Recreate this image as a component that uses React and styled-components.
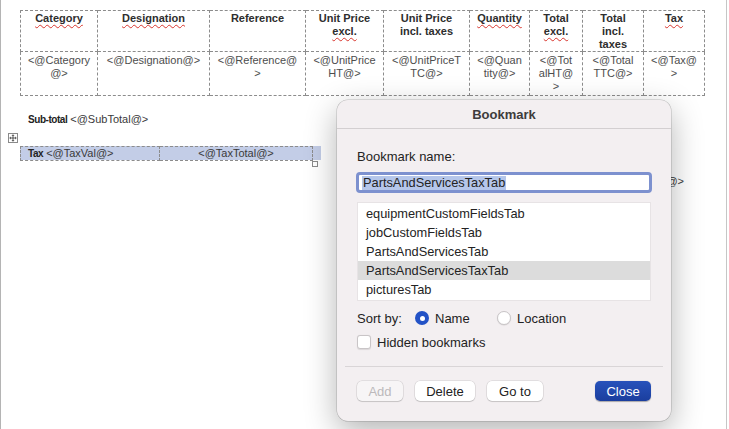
import React from "react";
import styled, { createGlobalStyle } from "styled-components";

const GlobalStyle = createGlobalStyle`
  html, body {
    margin: 0;
    padding: 0;
    background: #fff;
  }
  body {
    font-family: "Liberation Sans", Arial, sans-serif;
  }
`;

const Page = styled.div`
  position: relative;
  box-sizing: border-box;
  width: 727px;
  height: 429px;
  padding: 10px 0 0 19px;
  border-left: 1px solid #b4b4b4;
  border-right: 1px solid #c6c6c6;
  background: #fff;
  overflow: hidden;
`;

/* ---------- document table ---------- */

const Grid = styled.table`
  border-collapse: collapse;
  table-layout: fixed;
  width: 684px;
  font-size: 11px;
`;

const HeadCell = styled.th`
  height: 39px;
  padding: 1px 2px 0;
  border: 1px dashed #8c8c8c;
  vertical-align: top;
  text-align: center;
  font-weight: bold;
  line-height: 13px;
  color: #2e2e2e;
  white-space: nowrap;
`;

const BodyCell = styled.td`
  height: 41px;
  padding: 2px 2px 0;
  border: 1px dashed #8c8c8c;
  vertical-align: top;
  text-align: center;
  line-height: 13px;
  color: #4d4d4d;
  white-space: nowrap;
`;

const Squiggle = styled.span`
  text-decoration: ${(p) => (p.$spell ? "underline wavy #d8362e" : "none")};
  text-decoration-thickness: 1px;
  text-underline-offset: 2px;
`;

const Para = styled.div`
  font-size: 11px;
  line-height: 14px;
  color: #3a3a3a;
  margin-top: ${(p) => p.$top}px;
  padding-left: ${(p) => p.$indent || 0}px;
  padding-right: ${(p) => p.$right || 0}px;
  text-align: ${(p) => p.$align || "left"};
`;

const Label = styled.b`
  font-size: 10px;
  letter-spacing: -0.45px;
  color: #222;
  margin-right: 3px;
`;

const TaxBlock = styled.div`
  position: relative;
  margin-top: 19px;
  display: flex;
  width: 301px;
  height: 14px;
  background: #c3cde7;
`;

const TaxCell = styled.div`
  box-sizing: border-box;
  width: ${(p) => p.$w}px;
  height: 15px;
  border: 1px dashed #8c8c8c;
  border-left-width: ${(p) => (p.$first ? 1 : 0)}px;
  font-size: 11px;
  line-height: 12px;
  color: #3a3a3a;
  padding-left: ${(p) => (p.$center ? 0 : 7)}px;
  text-align: ${(p) => (p.$center ? "center" : "left")};
  white-space: nowrap;
`;

const MoveHandle = styled.div`
  position: absolute;
  left: -12px;
  top: -13px;
  box-sizing: border-box;
  width: 10px;
  height: 10px;
  border: 1px solid #8a8a8a;
  background: #fff;
  display: flex;
  align-items: center;
  justify-content: center;
`;

const ResizeHandle = styled.div`
  position: absolute;
  left: 292px;
  top: 15px;
  box-sizing: border-box;
  width: 6px;
  height: 6px;
  border: 1px solid #8a8a8a;
  background: #fff;
`;

/* ---------- bookmark dialog ---------- */

const Dialog = styled.div`
  position: absolute;
  left: 336px;
  top: 100px;
  width: 334px;
  height: 321px;
  box-sizing: border-box;
  background: #f3eff1;
  border-radius: 11px;
  box-shadow: 0 0 0 0.5px rgba(0, 0, 0, 0.22), 0 10px 32px rgba(0, 0, 0, 0.3);
  font-family: "Liberation Sans", Arial, sans-serif;
  font-size: 13px;
  color: #232323;
  display: flex;
  flex-direction: column;
`;

const TitleBar = styled.div`
  height: 28px;
  border-bottom: 1px solid #d3cfd1;
  display: flex;
  align-items: center;
  justify-content: center;
  font-weight: bold;
  color: #3d3b3c;
`;

const Body = styled.div`
  padding: 0 20px;
  display: flex;
  flex-direction: column;
`;

const FieldLabel = styled.div`
  margin-top: 20px;
  line-height: 16px;
`;

const NameInput = styled.div`
  margin: 7px 0 0 -1px;
  box-sizing: border-box;
  width: 296px;
  height: 21px;
  padding: 1px 3px 0;
  border: 3px solid #7d91cf;
  border-radius: 4px;
  background: #fff;
  display: flex;
  align-items: center;
`;

const Selected = styled.span`
  background: #b5c6ea;
  font-size: 12.8px;
  line-height: 14px;
  padding: 0 1px;
`;

const List = styled.div`
  margin-top: 9px;
  box-sizing: border-box;
  height: 99px;
  padding: 1px 0;
  border: 1px solid #e7e3e5;
  background: #fff;
`;

const Item = styled.div`
  height: 19px;
  line-height: 19px;
  padding-left: 8px;
  font-size: 12.8px;
  background: ${(p) => (p.$active ? "#dcdcdc" : "transparent")};
`;

const Row = styled.div`
  margin-top: ${(p) => p.$top}px;
  height: 18px;
  display: flex;
  align-items: center;
`;

const SortLabel = styled.span`
  width: 58px;
`;

const Option = styled.label`
  display: flex;
  align-items: center;
  gap: 6px;
  width: ${(p) => (p.$w ? `${p.$w}px` : "auto")};
`;

const Radio = styled.span`
  box-sizing: border-box;
  width: 14px;
  height: 14px;
  border-radius: 50%;
  display: flex;
  align-items: center;
  justify-content: center;
  background: ${(p) => (p.$on ? "#2352c6" : "#fff")};
  border: ${(p) => (p.$on ? "none" : "1px solid #c9c5c7")};
  box-shadow: ${(p) => (p.$on ? "none" : "0 0.5px 1px rgba(0,0,0,0.12)")};

  &::after {
    content: "";
    display: ${(p) => (p.$on ? "block" : "none")};
    width: 5px;
    height: 5px;
    border-radius: 50%;
    background: #fff;
  }
`;

const Check = styled.span`
  box-sizing: border-box;
  width: 14px;
  height: 14px;
  border-radius: 3px;
  border: 1px solid #c9c5c7;
  background: #fff;
  box-shadow: 0 0.5px 1px rgba(0, 0, 0, 0.1);
`;

const Divider = styled.div`
  margin: 15px -12px 0;
  height: 1px;
  background: #d9d5d7;
`;

const Buttons = styled.div`
  margin-top: 14px;
  display: flex;
  gap: 12px;
`;

const Button = styled.button`
  box-sizing: border-box;
  width: ${(p) => p.$w}px;
  height: 20px;
  margin-left: ${(p) => (p.$push ? "auto" : "0")};
  padding: 0;
  border: none;
  border-radius: 5px;
  font-family: inherit;
  font-size: 13px;
  color: ${(p) => (p.$primary ? "#fff" : p.disabled ? "#bcb9bb" : "#222")};
  background: ${(p) =>
    p.$primary
      ? "linear-gradient(#2752bb, #1b3e9e)"
      : p.disabled
      ? "#f7f5f6"
      : "#fff"};
  box-shadow: ${(p) =>
    p.$primary
      ? "0 0.5px 1px rgba(0,0,0,0.3)"
      : "0 0 0 0.5px rgba(0,0,0,0.14), 0 1px 1px rgba(0,0,0,0.12)"};
`;

const columns = [
  { w: 77, head: [["Category", true]], body: ["<@Category", "@>"] },
  { w: 112, head: [["Designation", true]], body: ["<@Designation@>"] },
  { w: 96, head: [["Reference"]], body: ["<@Reference@", ">"] },
  { w: 78, head: [["Unit Price"], ["excl.", true]], body: ["<@UnitPrice", "HT@>"] },
  { w: 86, head: [["Unit Price"], ["incl. taxes"]], body: ["<@UnitPriceT", "TC@>"] },
  { w: 60, head: [["Quantity", true]], body: ["<@Quan", "tity@>"] },
  { w: 53, head: [["Total"], ["excl.", true]], body: ["<@Tot", "alHT@", ">"] },
  { w: 61, head: [["Total"], ["incl."], ["taxes"]], body: ["<@Total", "TTC@>"] },
  { w: 61, head: [["Tax", true]], body: ["<@Tax@", ">"] },
];

const bookmarks = [
  "equipmentCustomFieldsTab",
  "jobCustomFieldsTab",
  "PartsAndServicesTab",
  "PartsAndServicesTaxTab",
  "picturesTab",
];

const MoveIcon = () => (
  <svg width="8" height="8" viewBox="0 0 8 8" fill="none" stroke="#333" strokeWidth="0.8">
    <path d="M4 1V7M1 4H7" />
    <path d="M3 1.9L4 0.7L5 1.9M3 6.1L4 7.3L5 6.1M1.9 3L0.7 4L1.9 5M6.1 3L7.3 4L6.1 5" />
  </svg>
);

const App = () => {
  return (
    <Page>
      <GlobalStyle />
      <Grid>
        <colgroup>
          {columns.map((c, i) => (
            <col key={i} style={{ width: c.w }} />
          ))}
        </colgroup>
        <tbody>
          <tr>
            {columns.map((c, i) => (
              <HeadCell key={i}>
                {c.head.map(([t, spell], j) => (
                  <div key={j}>
                    <Squiggle $spell={spell}>{t}</Squiggle>
                  </div>
                ))}
              </HeadCell>
            ))}
          </tr>
          <tr>
            {columns.map((c, i) => (
              <BodyCell key={i}>
                {c.body.map((t, j) => (
                  <div key={j}>{t}</div>
                ))}
              </BodyCell>
            ))}
          </tr>
        </tbody>
      </Grid>

      <Para $top={16} $indent={8}>
        <Label>Sub-total</Label>&lt;@SubTotal@&gt;
      </Para>

      <TaxBlock>
        <MoveHandle>
          <MoveIcon />
        </MoveHandle>
        <TaxCell $w={140} $first>
          <Label>Tax</Label>&lt;@TaxVal@&gt;
        </TaxCell>
        <TaxCell $w={153} $center>
          &lt;@TaxTotal@&gt;
        </TaxCell>
        <ResizeHandle />
      </TaxBlock>

      <Para $top={14} $align="right" $right={42}>
        &lt;@TotalTTC@&gt;
      </Para>

      <Dialog>
        <TitleBar>Bookmark</TitleBar>
        <Body>
          <FieldLabel>Bookmark name:</FieldLabel>
          <NameInput>
            <Selected>PartsAndServicesTaxTab</Selected>
          </NameInput>
          <List>
            {bookmarks.map((b) => (
              <Item key={b} $active={b === "PartsAndServicesTaxTab"}>
                {b}
              </Item>
            ))}
          </List>
          <Row $top={8}>
            <SortLabel>Sort by:</SortLabel>
            <Option $w={82}>
              <Radio $on />
              Name
            </Option>
            <Option>
              <Radio />
              Location
            </Option>
          </Row>
          <Row $top={6}>
            <Option>
              <Check />
              Hidden bookmarks
            </Option>
          </Row>
          <Divider />
          <Buttons>
            <Button $w={46} disabled>
              Add
            </Button>
            <Button $w={60}>Delete</Button>
            <Button $w={56}>Go to</Button>
            <Button $w={56} $primary $push>
              Close
            </Button>
          </Buttons>
        </Body>
      </Dialog>
    </Page>
  );
};

export default App;
